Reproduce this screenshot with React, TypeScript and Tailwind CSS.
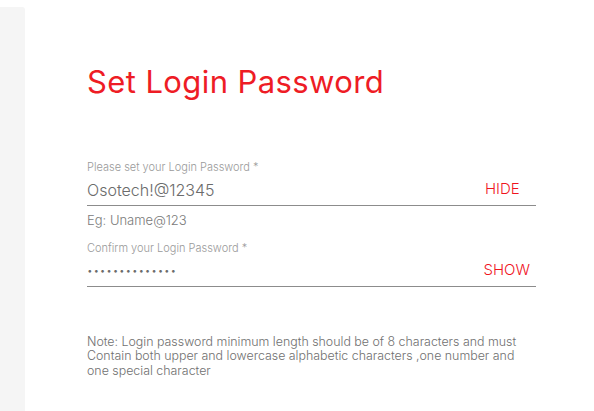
const Field = ({
  label,
  value,
  action,
  masked,
}: {
  label: string;
  value: string;
  action: string;
  masked?: boolean;
}) => {
  return (
    <div className="flex flex-col">
      <label className="text-[11px] leading-[14px] text-[#9a9a9a]">{label}</label>
      <div className="flex items-center justify-between h-[32px] border-b border-[#8c8c8c]">
        <span
          className={
            masked
              ? "text-[10px] tracking-[0.8px] text-[#6b6b6b]"
              : "text-[16px] text-[#6b6b6b]"
          }
        >
          {value}
        </span>
        <button className="text-[15px] text-[#f0141e] pr-[6px] min-w-[51px] text-left">
          {action}
        </button>
      </div>
    </div>
  );
};

export default function App() {
  return (
    <div
      className="flex h-[411px] w-[594px] bg-white font-light"
      style={{ fontFamily: "Inter, 'Noto Sans', sans-serif" }}
    >
      <div className="mt-[7px] w-[25px] rounded-tr-[3px] bg-[#f5f5f5]" />
      <div className="flex w-[511px] flex-col pl-[62px] pt-[62px]">
        <h1 className="text-[31px] font-normal leading-[40px] tracking-[0.4px] text-[#ee1c25]">
          Set Login Password
        </h1>
        <div className="mt-[58px]">
          <Field label="Please set your Login Password *" value="Osotech!@12345" action="HIDE" />
        </div>
        <p className="mt-[5px] text-[13px] text-[#7a7a7a]">Eg: Uname@123</p>
        <div className="mt-[10px]">
          <Field
            label="Confirm your Login Password *"
            value="••••••••••••••"
            action="SHOW"
            masked
          />
        </div>
        <p className="mt-[48px] text-[12.4px] leading-[14.5px] text-[#707070]">
          Note: Login password minimum length should be of 8 characters and must Contain both
          upper and lowercase alphabetic characters ,one number and one special character
        </p>
      </div>
    </div>
  );
}
